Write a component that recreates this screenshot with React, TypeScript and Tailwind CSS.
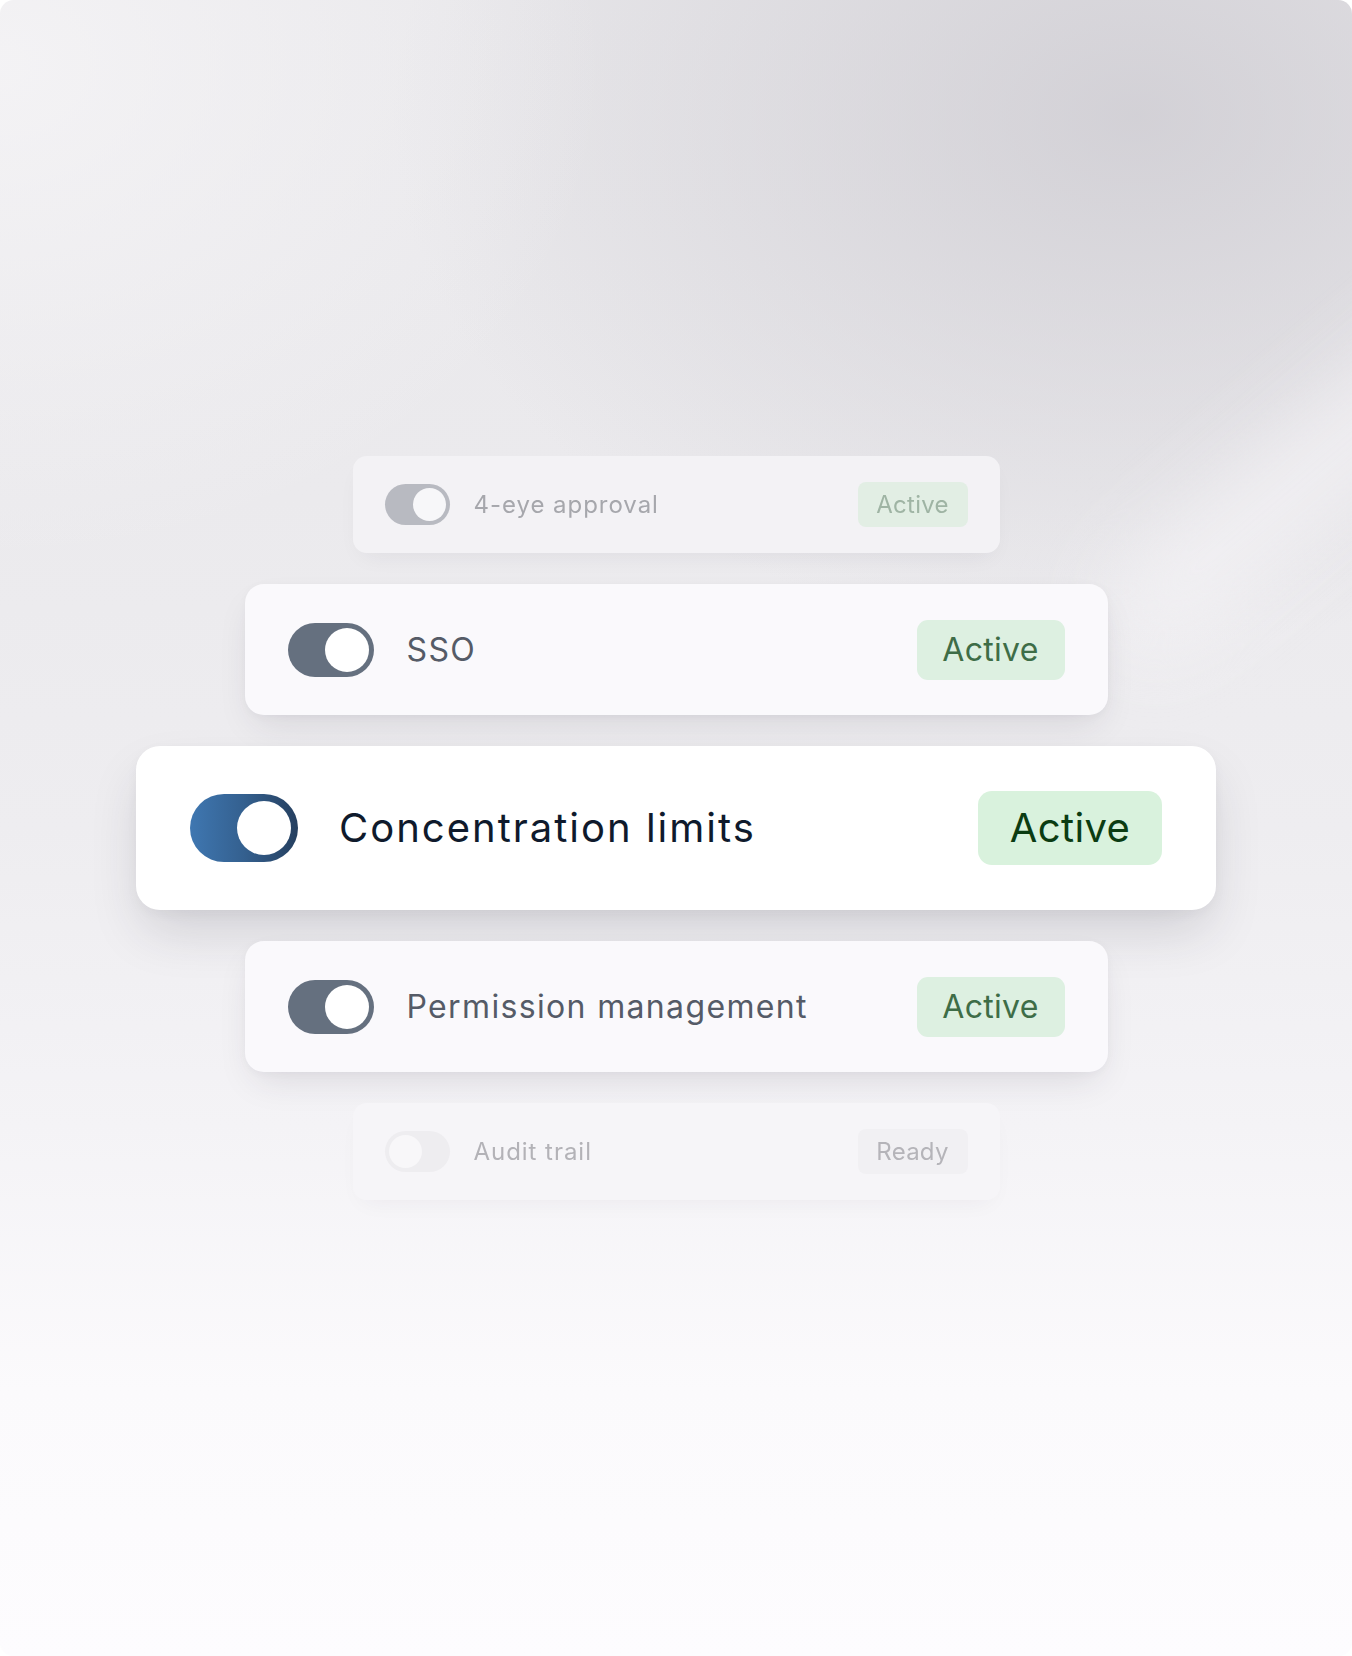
import React from "react";

type Size = "lg" | "md" | "sm";
type Tone = "focus" | "near" | "far" | "faded";

interface Row {
  label: string;
  status: string;
  size: Size;
  tone: Tone;
  on: boolean;
}

const rows: Row[] = [
  { label: "4-eye approval", status: "Active", size: "sm", tone: "far", on: true },
  { label: "SSO", status: "Active", size: "md", tone: "near", on: true },
  { label: "Concentration limits", status: "Active", size: "lg", tone: "focus", on: true },
  { label: "Permission management", status: "Active", size: "md", tone: "near", on: true },
  { label: "Audit trail", status: "Ready", size: "sm", tone: "faded", on: false },
];

// Geometry for each depth of the stack
const sizes: Record<Size, { card: string; gap: string; toggle: string; knob: string; label: string; badge: string }> = {
  lg: {
    card: "w-[1080px] h-[164px] px-[54px] rounded-[24px]",
    gap: "gap-[41px]",
    toggle: "w-[108px] h-[68px] p-[7px]",
    knob: "w-[54px] h-[54px]",
    label: "text-[40px] tracking-[0.05em]",
    badge: "w-[184px] h-[74px] rounded-[14px] text-[40px]",
  },
  md: {
    card: "w-[863px] h-[131px] px-[43px] rounded-[19px]",
    gap: "gap-[33px]",
    toggle: "w-[86px] h-[54px] p-[5px]",
    knob: "w-[44px] h-[44px]",
    label: "text-[32px] tracking-[0.042em]",
    badge: "w-[148px] h-[60px] rounded-[11px] text-[32px]",
  },
  sm: {
    card: "w-[647px] h-[97px] px-[32px] rounded-[14px]",
    gap: "gap-[24px]",
    toggle: "w-[65px] h-[41px] p-[4px]",
    knob: "w-[33px] h-[33px]",
    label: "text-[24px] tracking-[0.04em]",
    badge: "w-[110px] h-[45px] rounded-[8px] text-[24px]",
  },
};

// Colour treatment for each depth of the stack
const tones: Record<Tone, { card: string; track: string; knob: string; label: string; badge: string }> = {
  focus: {
    card: "bg-white shadow-[0_26px_52px_-8px_rgba(44,40,60,0.17),0_4px_12px_rgba(44,40,60,0.04)]",
    track: "bg-[linear-gradient(90deg,#3f77b1_0%,#34608f_50%,#253f5f_100%)]",
    knob: "bg-white",
    label: "text-[#0f1a2c]",
    badge: "bg-[#d9f2dd] text-[#0b3c12]",
  },
  near: {
    card: "bg-[#faf9fc] shadow-[0_16px_36px_-10px_rgba(44,40,60,0.13),0_2px_8px_rgba(44,40,60,0.03)]",
    track: "bg-[#65707f]",
    knob: "bg-white",
    label: "text-[#555b67]",
    badge: "bg-[#ddf0e1] text-[#3e6d47]",
  },
  far: {
    card: "bg-[#f3f2f5] shadow-[0_10px_24px_-10px_rgba(44,40,60,0.08)] blur-[0.4px]",
    track: "bg-[#b8bac1]",
    knob: "bg-[#f7f7f9]",
    label: "text-[#a6a7ac]",
    badge: "bg-[#e2eee4] text-[#9fb4a4]",
  },
  faded: {
    card: "bg-[#f6f5f8] shadow-[0_10px_24px_-10px_rgba(44,40,60,0.06)] blur-[0.7px]",
    track: "bg-[#eeedf0]",
    knob: "bg-[#f8f7f9]",
    label: "text-[#b3b2b7]",
    badge: "bg-[#f1f0f3] text-[#b5b4b9]",
  },
};

function Toggle({ size, tone, on }: { size: Size; tone: Tone; on: boolean }) {
  const s = sizes[size];
  const t = tones[tone];
  return (
    <div className={`flex shrink-0 items-center rounded-full ${s.toggle} ${t.track} ${on ? "justify-end" : "justify-start"}`}>
      <div className={`rounded-full ${s.knob} ${t.knob}`} />
    </div>
  );
}

function SettingCard({ row }: { row: Row }) {
  const s = sizes[row.size];
  const t = tones[row.tone];
  return (
    <div className={`flex items-center justify-between ${s.card} ${t.card}`}>
      <div className={`flex items-center ${s.gap}`}>
        <Toggle size={row.size} tone={row.tone} on={row.on} />
        <span className={`leading-none ${s.label} ${t.label}`}>{row.label}</span>
      </div>
      <span className={`flex items-center justify-center leading-none tracking-[0.01em] ${s.badge} ${t.badge}`}>
        {row.status}
      </span>
    </div>
  );
}

export default function App() {
  return (
    <div className="min-h-screen w-full bg-white">
      <div className="relative h-[1656px] w-[1352px] overflow-hidden rounded-[14px] font-['Inter','Liberation_Sans',sans-serif] bg-[radial-gradient(ellipse_45%_30%_at_0%_4%,rgba(246,245,247,0.8),rgba(246,245,247,0)_100%),radial-gradient(ellipse_55%_32%_at_84%_7%,rgba(205,203,209,0.8),rgba(205,203,209,0)_100%),linear-gradient(180deg,#e9e8eb_0%,#ebeaed_30%,#eeedf0_50%,#f4f3f6_68%,#fbfafc_84%,#fdfcfe_100%)]">
        {/* soft light sweep across the right edge */}
        <div className="pointer-events-none absolute left-[1060px] top-[420px] h-[90px] w-[520px] -rotate-[40deg] rounded-full bg-[#f6f5f8]/70 blur-[40px]" />
        <div className="relative flex flex-col items-center gap-[31px] pt-[456px]">
          {rows.map((row) => (
            <SettingCard key={row.label} row={row} />
          ))}
        </div>
      </div>
    </div>
  );
}
